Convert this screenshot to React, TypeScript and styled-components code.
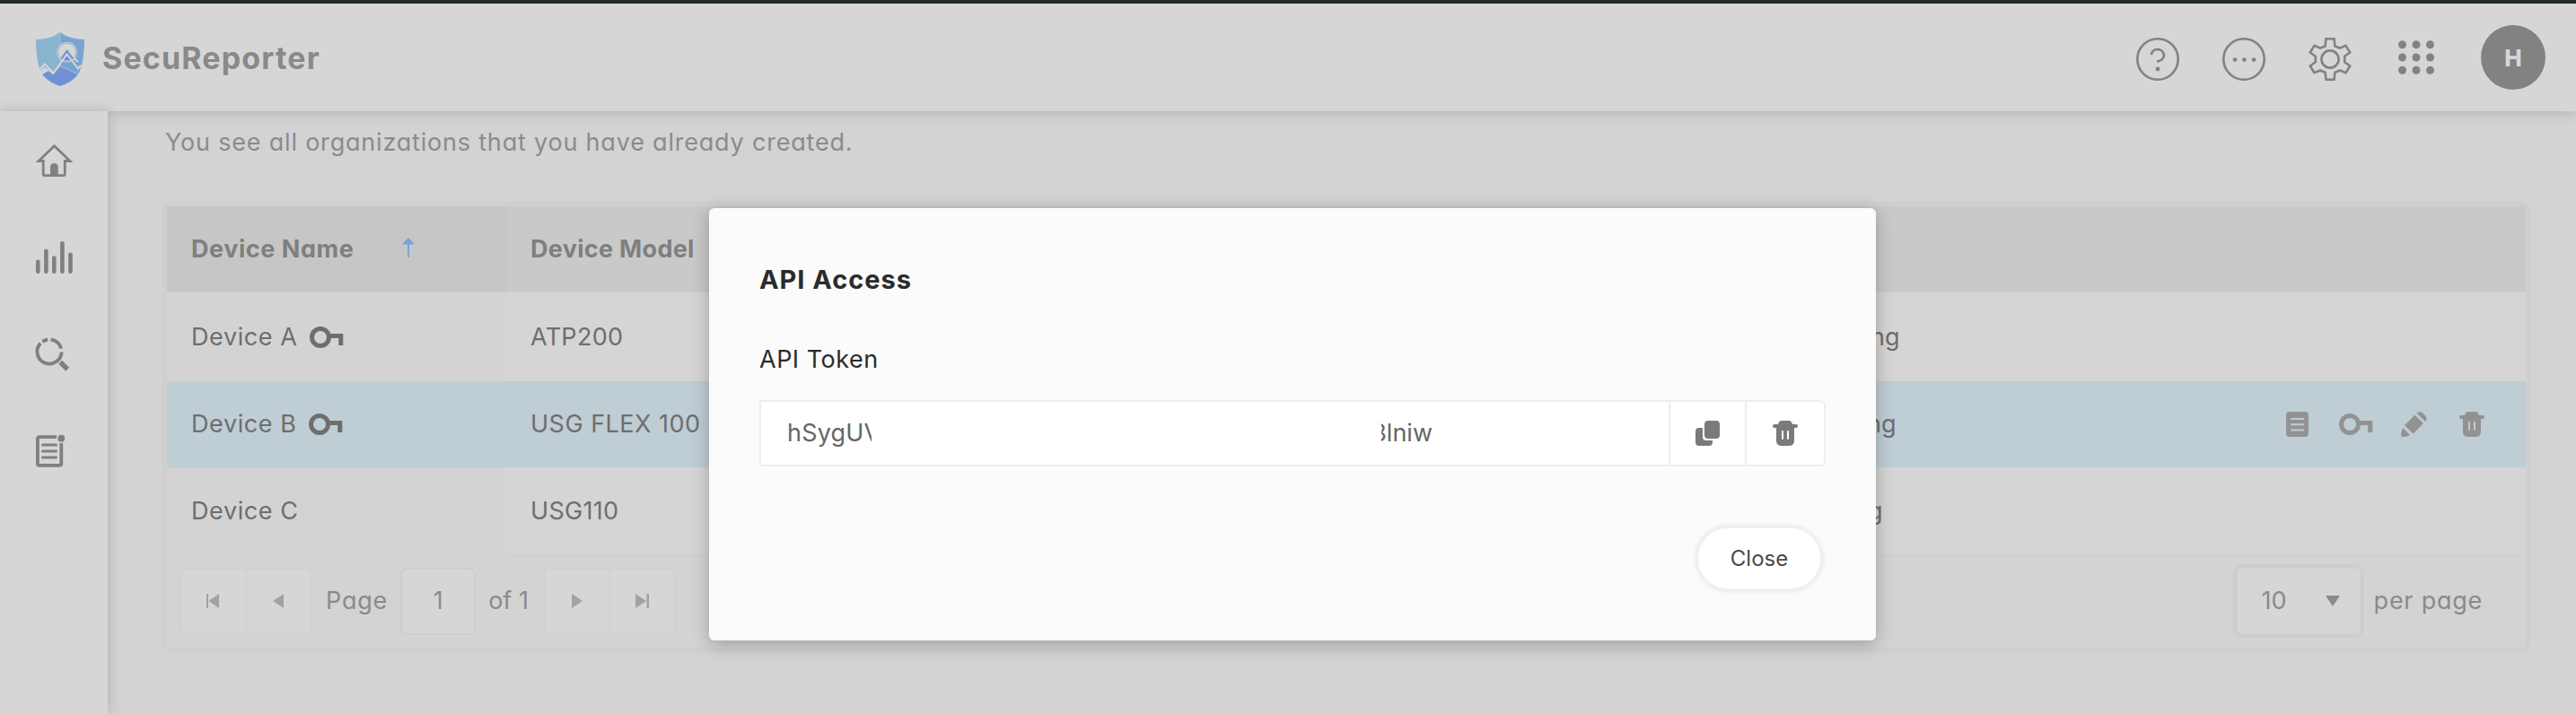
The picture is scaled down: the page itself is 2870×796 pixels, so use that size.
import React from "react";
import styled, { createGlobalStyle } from "styled-components";

const Global = createGlobalStyle`
  * { box-sizing: border-box; }
  body { margin: 0; background: #d3d3d3; overflow: hidden; font-family: Inter, "Open Sans", sans-serif; font-feature-settings: "cv11" 1; font-size: 27px; }
  svg { display: block; overflow: visible; flex: none; }
`;

const Page = styled.div`
  position: relative;
  width: 2870px;
  height: 796px;
  overflow: hidden;
  display: flex;
  flex-direction: column;
  background: #d3d3d3;
`;

const Header = styled.header`
  flex: none;
  height: 124px;
  border-top: 4px solid #22292d;
  background: #d6d6d6;
  box-shadow: 0 1px 14px rgba(0, 0, 0, 0.17);
  display: flex;
  align-items: center;
  padding: 0 34px 0 40px;
  position: relative;
`;

const LogoSlot = styled.div`
  padding-top: 4px;
`;

const Brand = styled.h1`
  flex: 1;
  margin: 1px 0 0 20px;
  font-size: 34px;
  line-height: 40px;
  font-weight: 700;
  color: #898989;
  letter-spacing: 1.15px;
`;

const Tools = styled.nav`
  display: flex;
  align-items: center;
  gap: 48px;
  margin-right: 48px;
  padding-top: 4px;
`;

const Avatar = styled.div`
  width: 72px;
  height: 72px;
  border-radius: 50%;
  background: #828282;
  color: #d6d6d6;
  font-weight: 800;
  font-size: 26px;
  display: flex;
  align-items: center;
  justify-content: center;
`;

const Body = styled.div`
  flex: 1;
  display: flex;
  min-height: 0;
`;

const Sidebar = styled.aside`
  flex: none;
  width: 120px;
  background: #d6d6d6;
  box-shadow: 0 0 14px rgba(0, 0, 0, 0.17);
  position: relative;
  display: flex;
  flex-direction: column;
  gap: 66px;
  padding: 34px 0 0 38px;
`;

const Main = styled.main`
  flex: 1;
  padding: 17px 54px 0 64px;
`;

const Label = styled.span<{ $ls?: number; $c?: string; $bold?: boolean }>`
  letter-spacing: ${(p) => p.$ls ?? 0}px;
  color: ${(p) => p.$c ?? "inherit"};
  font-weight: ${(p) => (p.$bold ? 700 : 400)};
  white-space: pre;
  line-height: 36px;
`;

const Intro = styled.p`
  margin: 0 0 51px;
  height: 36px;
  color: #8b8b8b;
`;

const Table = styled.section`
  border: 2px solid #d0d0d0;
  border-radius: 6px;
  box-shadow: 0 0 6px rgba(0, 0, 0, 0.06);
  background: #d5d5d5;
`;

const Row = styled.div<{ $h: number; $selected?: boolean; $head?: boolean }>`
  display: grid;
  grid-template-columns: 378px 1516px 1fr auto;
  align-items: stretch;
  height: ${(p) => p.$h}px;
  background: ${(p) => (p.$selected ? "#bfcdd4" : p.$head ? "#c9c9c9" : "#d5d5d5")};
  color: ${(p) => (p.$head ? "#7f7f7f" : "#6e6e6e")};
  & > :first-child {
    background: ${(p) => (p.$selected ? "#bfcdd4" : p.$head ? "#c6c6c6" : "#d3d3d3")};
  }
`;

const Cell = styled.div<{ $pad?: number }>`
  display: flex;
  align-items: center;
  padding: 0 0 0 ${(p) => p.$pad ?? 27}px;
`;

const SortMark = styled.svg`
  margin: -4px 102px 0 auto;
`;

const KeySlot = styled.span`
  margin-left: 13px;
`;

const Actions = styled.div`
  display: flex;
  align-items: center;
  color: #929292;
  padding-right: 46px;
`;

const Gap = styled.span<{ $w: number }>`
  flex: none;
  width: ${(p) => p.$w}px;
`;

const Pager = styled.footer`
  display: flex;
  align-items: center;
  height: 104px;
  padding: 0 48px 2px 15px;
  margin-left: -1px;
  border-top: 2px solid #d0d0d0;
  background: #d3d3d3;
  border-radius: 0 0 4px 4px;
  color: #8a8a8a;
`;

const ButtonPair = styled.div<{ $side: "left" | "right" }>`
  display: flex;
  width: 147px;
  height: 74px;
  border: 2px solid #d1d1d1;
  border-radius: ${(p) => (p.$side === "left" ? "8px 0 0 8px" : "0 8px 8px 0")};
  background: #d6d6d6;
  color: #a2a2a2;
`;

const PagerButton = styled.div`
  flex: 1;
  display: flex;
  align-items: center;
  justify-content: center;
  & + & { border-left: 2px solid #d1d1d1; }
`;

const PageInput = styled.div`
  width: 84px;
  height: 75px;
  border: 2px solid #cdcdcd;
  border-radius: 7px;
  background: #d6d6d6;
  display: flex;
  align-items: center;
  justify-content: center;
`;

const Spacer = styled.div`flex: 1;`;

const Select = styled.div`
  width: 140px;
  height: 76px;
  border-radius: 6px;
  border: 2px solid #d0d0d0;
  background: #d6d6d6;
  box-shadow: 0 0 5px rgba(0, 0, 0, 0.1);
  display: flex;
  align-items: center;
  justify-content: space-between;
  padding: 0 22px 0 27px;
`;

const Modal = styled.div`
  position: absolute;
  left: 790px;
  top: 232px;
  width: 1300px;
  height: 482px;
  padding: 60px 56px 56px;
  border-radius: 6px;
  background: #fbfbfb;
  box-shadow: 0 4px 20px rgba(0, 0, 0, 0.26);
  display: flex;
  flex-direction: column;
`;

const ModalTitle = styled.h2`
  margin: 0 0 51px;
  font-size: 29px;
  line-height: 40px;
  font-weight: 700;
  color: #2b2b2b;
  letter-spacing: 0.95px;
`;

const TokenField = styled.div`
  display: flex;
  width: 1188px;
  height: 74px;
  margin-top: 27px;
  border: 2px solid #eeeeee;
  border-radius: 0 6px 6px 0;
  background: #fff;
  color: #666;
`;

const TokenValue = styled.div`
  flex: 1;
  display: flex;
  align-items: center;
  padding-left: 29px;
`;

const Clip = styled.span<{ $w: number; $end?: boolean }>`
  display: flex;
  justify-content: ${(p) => (p.$end ? "flex-end" : "flex-start")};
  overflow: hidden;
  width: ${(p) => p.$w}px;
`;

const TokenButton = styled.div<{ $w: number }>`
  width: ${(p) => p.$w}px;
  border-left: 2px solid #eeeeee;
  display: flex;
  align-items: center;
  justify-content: center;
  color: #7a7a7a;
`;

const CloseButton = styled.div`
  align-self: flex-end;
  margin: 67px 4px 0 0;
  width: 140px;
  height: 71px;
  border-radius: 36px;
  border: 2px solid #f1f1f1;
  background: #fff;
  box-shadow: 0 0 6px rgba(0, 0, 0, 0.12);
  display: flex;
  align-items: center;
  justify-content: center;
  font-size: 24px;
  color: #4a4a4a;
`;

const KeyIcon = () => (
  <svg width="38" height="24" viewBox="0 0 38 24">
    <circle cx="12" cy="12" r="9.5" fill="none" stroke="currentColor" strokeWidth="5" />
    <path d="M22 8H37.3V21H32.2V13H22Z" fill="currentColor" />
  </svg>
);

const TrashIcon = () => (
  <svg width="28" height="28" viewBox="0 0 28 28" fill="currentColor">
    <path fillRule="evenodd" d="M6 4Q7 0 10 0H18Q21 0 22 4H26A2 2 0 0 1 26 8H24V22Q24 28 18 28H10Q4 28 4 22V8H2A2 2 0 0 1 2 4ZM11 11Q10 11 10 12V20Q10 21 11 21T12 20V12Q12 11 11 11ZM17 11Q16 11 16 12V20Q16 21 17 21T18 20V12Q18 11 17 11Z" />
  </svg>
);

const DocIcon = () => (
  <svg width="25" height="28" viewBox="0 0 25 28">
    <path fill="currentColor" fillRule="evenodd" d="M4 0H21Q25 0 25 4V24Q25 28 21 28H4Q0 28 0 24V4Q0 0 4 0ZM5 7V9H20V7ZM5 13.2V15.2H20V13.2ZM5 19.4V21.4H20V19.4Z" />
  </svg>
);

const PencilIcon = () => (
  <svg width="29" height="28" viewBox="0 0 29 28" fill="currentColor">
    <path d="M17.5 1.6Q20-1 23.5 1L27 4.5Q29.8 8 27.2 11Z" />
    <path d="M15.3 3.7L25 12.9L13.5 24.6L4 15.3Z" />
    <path d="M2.3 18L10 26Q6 28.5 2 28Q0 28 0 25Q0.5 21 2.3 18Z" />
  </svg>
);

const CopyIcon = () => (
  <svg width="27" height="28" viewBox="0 0 27 28" fill="currentColor">
    <rect x="10" y="0" width="17" height="20" rx="4" />
    <path d="M4 8H8V18Q8 22 12 22H19V24Q19 28 15 28H4Q0 28 0 24V12Q0 8 4 8Z" />
  </svg>
);

const Logo = () => (
  <svg width="54" height="60" viewBox="0 0 54 60">
    <path d="M27 0Q16 8 0 8Q0 30 5 43L10 39L20 46L27 36Z" fill="#88b4d0" />
    <path d="M27 0Q38 8 54 8Q54 34 47 47L27 38Z" fill="#7aa3d3" />
    <path d="M7 47L14 43L19 47L27 38L47 47Q40 56 27 60Q14 56 7 47Z" fill="#7092d4" />
    <path d="M27 1V37L47 47" fill="none" stroke="#a9c2d6" strokeWidth="0.8" />
    <circle cx="34.6" cy="22.3" r="11.2" fill="#d6d6d6" />
    <circle cx="34.6" cy="22.3" r="10" fill="none" stroke="#8ea6d4" strokeWidth="0.9" />
    <path d="M27.5 29L34.5 19L42 29Q34.5 34 27.5 29Z" fill="#7092d4" />
    <path d="M4 42L10 35.5L19.5 45.5L34.5 24.5L47 40.5L50 37" fill="none" stroke="#d6d6d6" strokeWidth="2" />
    <path d="M42.5 29L47 33" stroke="#d6d6d6" strokeWidth="2" />
  </svg>
);

const HelpIcon = () => (
  <svg width="48" height="48" viewBox="0 0 48 48" fill="none" stroke="#828282" strokeWidth="2.6">
    <circle cx="24" cy="24" r="22.7" />
    <path d="M17 18A7.2 7.2 0 0 1 31 19.5C31 23 29 25 24 26.4" strokeLinecap="round" />
    <circle cx="24" cy="35" r="2.4" fill="#828282" stroke="none" />
  </svg>
);

const MoreIcon = () => (
  <svg width="48" height="48" viewBox="0 0 48 48" fill="#828282">
    <circle cx="24" cy="24" r="22.7" fill="none" stroke="#828282" strokeWidth="2.6" />
    <circle cx="14" cy="24.6" r="2.4" />
    <circle cx="24.4" cy="24.6" r="2.4" />
    <circle cx="35" cy="24.6" r="2.4" />
  </svg>
);

const GearIcon = () => (
  <svg width="48" height="48" viewBox="0 0 48 48" fill="none" stroke="#828282" strokeWidth="2.6">
    <path d="M19.5 1.3H28.5L29.5 9.5L35 11.7L41.5 8.8L46.2 16.5L40.2 20.8V27.2L46.2 31.5L41.5 39.2L35 36.5L29.5 38.7L28.5 46.7H19.5L18.5 38.7L13 36.5L6.5 39.2L1.8 31.5L7.8 27.2V20.8L1.8 16.5L6.5 8.8L13 11.7L18.5 9.5Z" />
    <circle cx="24" cy="24" r="9.6" />
  </svg>
);

const GridIcon = () => (
  <svg width="48" height="48" viewBox="0 0 48 48" fill="#828282">
    {[8, 22.3, 36.6].map((y) =>
      [8.5, 24, 39.5].map((x) => <circle key={x + "-" + y} cx={x} cy={y - 0.3} r="4.5" />)
    )}
  </svg>
);

const HomeIcon = () => (
  <svg width="42" height="42" viewBox="0 0 42 42" fill="none" stroke="#808080" strokeWidth="2.8">
    <path d="M10.2 21.5H5L22.5 4.8L40 21.5H34.3V36Q34.3 37.6 32.7 37.6H11.8Q10.2 37.6 10.2 36Z" />
    <path d="M18 38V29Q18 24 22.4 24T26.8 29V38Z" fill="#808080" stroke="none" />
  </svg>
);

const BarsIcon = () => (
  <svg width="42" height="42" viewBox="0 0 42 42" stroke="#808080" strokeWidth="4.6" strokeLinecap="round">
    <path d="M4.3 25.8V36.7M13.4 13.8V36.7M22.3 21.5V36.7M31.4 5.3V36.7M40.5 17.8V36.7" />
  </svg>
);

const SearchIcon = () => (
  <svg width="42" height="42" viewBox="0 0 42 42" fill="none" stroke="#808080" strokeWidth="3.9">
    <path d="M7.05 8.7A13.6 13.6 0 1 0 30.6 18.5" />
    <path d="M30.1 14.5A13.6 13.6 0 0 0 18.6 4.5" />
    <path d="M15.2 4.5A13.6 13.6 0 0 0 9.4 6.8" />
    <path d="M29.2 29.8L37.2 37.8" strokeWidth="5.6" />
  </svg>
);

const ReportIcon = () => (
  <svg width="42" height="42" viewBox="0 0 42 42" fill="none" stroke="#808080" strokeWidth="3.8">
    <path d="M25 5.2H6Q3.9 5.2 3.9 7.3V34.8Q3.9 36.9 6 36.9H28.2Q30.3 36.9 30.3 34.8V12" />
    <path d="M9.5 14H24.5M9.5 21H24.5M9.5 28H24.5" strokeWidth="3" strokeLinecap="round" />
    <circle cx="30.3" cy="6.7" r="3.9" fill="#808080" stroke="none" />
  </svg>
);

const rows = [
  { name: "Device A", key: true, model: "ATP200", mls: 0.3, tail: "ng", pad: 4, height: 99 },
  { name: "Device B", key: true, model: "USG FLEX 100", mls: 0.5, tail: "ng", pad: 0, height: 96, selected: true },
  { name: "Device C", key: false, model: "USG110", mls: 0.3, tail: "g", pad: 1, height: 97 },
];

export default function App() {
  return (
    <Page>
      <Global />
      <Header>
        <LogoSlot><Logo /></LogoSlot>
        <Brand>SecuReporter</Brand>
        <Tools>
          <HelpIcon />
          <MoreIcon />
          <GearIcon />
          <GridIcon />
        </Tools>
        <Avatar>H</Avatar>
      </Header>
      <Body>
        <Sidebar>
          <HomeIcon />
          <BarsIcon />
          <SearchIcon />
          <ReportIcon />
        </Sidebar>
        <Main>
          <Intro>
            <Label $ls={0.8}>You see all organizations that you have already created.</Label>
          </Intro>
          <Table>
            <Row $h={96} $head>
              <Cell>
                <Label $bold $ls={0.55}>Device Name</Label>
                <SortMark width="14" height="22" viewBox="0 0 14 22" fill="#7aa3d6">
                  <path d="M7 0L14 7.5H8V22H6V7.5H0Z" />
                </SortMark>
              </Cell>
              <Cell><Label $bold $ls={0.3}>Device Model</Label></Cell>
            </Row>
            {rows.map((r) => (
              <Row key={r.name} $h={r.height} $selected={r.selected}>
                <Cell>
                  <Label $ls={0.6}>{r.name}</Label>
                  {r.key && <KeySlot><KeyIcon /></KeySlot>}
                </Cell>
                <Cell><Label $ls={r.mls}>{r.model}</Label></Cell>
                <Cell $pad={r.pad}><Label>{r.tail}</Label></Cell>
                {r.selected && (
                  <Actions>
                    <DocIcon />
                    <Gap $w={34} />
                    <KeyIcon />
                    <Gap $w={31} />
                    <PencilIcon />
                    <Gap $w={36} />
                    <TrashIcon />
                  </Actions>
                )}
              </Row>
            ))}
            <Pager>
              <ButtonPair $side="left">
                <PagerButton>
                  <svg width="14" height="16" fill="currentColor"><path d="M0 0H2V16H0ZM14 0V16L2.5 8Z" /></svg>
                </PagerButton>
                <PagerButton>
                  <svg width="12" height="16" fill="currentColor"><path d="M12 0V16L0 8Z" /></svg>
                </PagerButton>
              </ButtonPair>
              <Gap $w={16} />
              <Label $ls={0.8}>Page</Label>
              <Gap $w={14} />
              <PageInput><Label>1</Label></PageInput>
              <Gap $w={14} />
              <Label>of 1</Label>
              <Gap $w={17} />
              <ButtonPair $side="right">
                <PagerButton>
                  <svg width="12" height="16" fill="currentColor"><path d="M0 0V16L12 8Z" /></svg>
                </PagerButton>
                <PagerButton>
                  <svg width="15" height="16" fill="currentColor"><path d="M0 0V16L12 8ZM12.5 0H15V16H12.5Z" /></svg>
                </PagerButton>
              </ButtonPair>
              <Spacer />
              <Select>
                <Label>10</Label>
                <svg width="16" height="12" fill="#8a8a8a"><path d="M0 0H16L8 12Z" /></svg>
              </Select>
              <Gap $w={14} />
              <Label $ls={0.75}>per page</Label>
            </Pager>
          </Table>
        </Main>
      </Body>
      <Modal>
        <ModalTitle>API Access</ModalTitle>
        <Label $c="#2b2b2b" $ls={0.5}>API Token</Label>
        <TokenField>
          <TokenValue>
            <Clip $w={94}><Label $ls={0.2}>hSygUV</Label></Clip>
            <Gap $w={568} />
            <Clip $w={57} $end><Label>8lniw</Label></Clip>
          </TokenValue>
          <TokenButton $w={85}><CopyIcon /></TokenButton>
          <TokenButton $w={88}><TrashIcon /></TokenButton>
        </TokenField>
        <CloseButton><Label>Close</Label></CloseButton>
      </Modal>
    </Page>
  );
}
